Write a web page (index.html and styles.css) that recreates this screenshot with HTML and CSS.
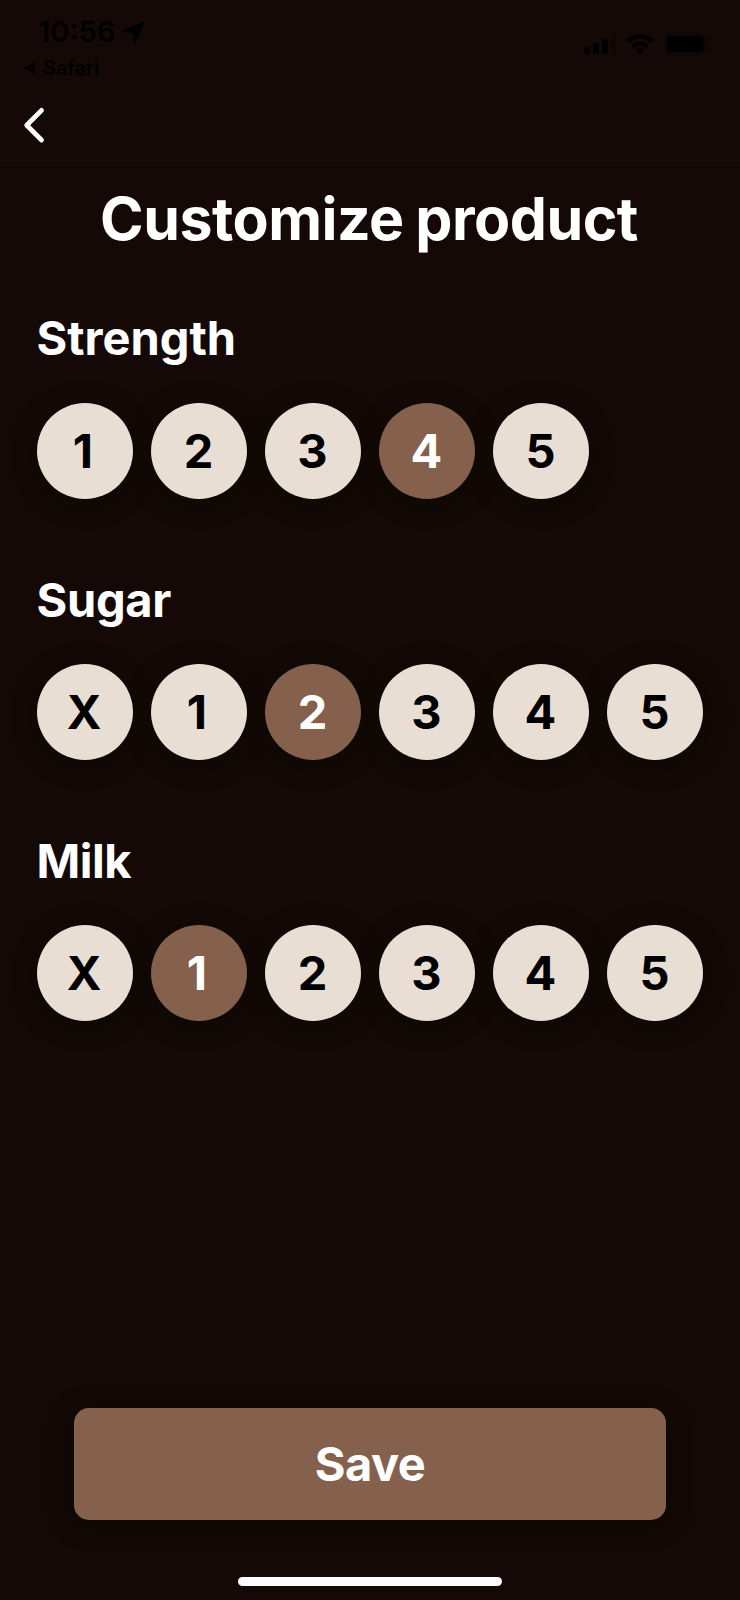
FILE: index.html
```
<!DOCTYPE html>
<html lang="en">
<head>
<meta charset="utf-8">
<title>Customize product</title>
<link rel="stylesheet" href="styles.css">
</head>
<body>
<div class="screen">
  <header class="status">
    <div class="status-left">
      <div class="clock"><span class="time">10:56</span>
        <svg class="location" width="23" height="23" viewBox="0 0 23 23"><path d="M21.500 .5 C22.300 .2 22.800 .8 22.500 1.600 L13.800 21.500 C13.200 22.800 11.500 22.500 11.400 21.100 L10.800 12.200 L2 11.400 C.6 11.300 .3 9.900 1.600 9.300 Z"/></svg>
      </div>
      <div class="return"><svg class="triangle" width="12" height="12" viewBox="0 0 12 12"><path d="M0 6 L12 0 V12 Z"/></svg><span class="app">Safari</span></div>
    </div>
    <div class="status-right">
      <svg class="signal" width="32" height="20" viewBox="0 0 32 20"><rect x="0" y="13" width="6" height="7" rx="1.5"/><rect x="9" y="9" width="6" height="11" rx="1.5"/><rect x="18" y="5" width="6" height="15" rx="1.5"/><rect x="26.500" y="0" width="5.500" height="20" rx="1.5" opacity=".25"/></svg>
      <svg class="wifi" width="28" height="21" viewBox="0 0 28 21"><g fill="none" stroke="#000" stroke-width="4"><path d="M1.500 7.500 Q14 -3 26.500 7.500"/><path d="M6.500 12.500 Q14 6.500 21.500 12.500"/></g><path d="M9.500 16 Q14 12.600 18.500 16 L14 20.500 Z"/></svg>
      <svg class="battery" width="46" height="22" viewBox="0 0 46 22"><rect x="1" y="1" width="39" height="20" rx="5" fill="none" stroke="#0b0907" stroke-width="2"/><rect x="2.500" y="3" width="36" height="16" rx="3"/><path d="M43 7 Q46 11 43 15 Z" fill="#0b0907"/></svg>
    </div>
  </header>
  <nav class="nav">
    <svg width="24" height="38" viewBox="0 0 24 38"><path d="M19.500 4.400 L4.700 19.200 L19.500 34" fill="none" stroke="#fff" stroke-width="4.800" stroke-linecap="round" stroke-linejoin="round"/></svg>
  </nav>
  <main class="content">
    <h1 class="title">Customize product</h1>
    <section class="group">
      <h2 class="label strength">Strength</h2>
      <div class="options"><button class="option one">1</button><button class="option">2</button><button class="option">3</button><button class="option selected">4</button><button class="option">5</button></div>
    </section>
    <section class="group">
      <h2 class="label sugar">Sugar</h2>
      <div class="options"><button class="option none">X</button><button class="option one">1</button><button class="option selected">2</button><button class="option">3</button><button class="option">4</button><button class="option">5</button></div>
    </section>
    <section class="group">
      <h2 class="label milk">Milk</h2>
      <div class="options"><button class="option none">X</button><button class="option selected one">1</button><button class="option">2</button><button class="option">3</button><button class="option">4</button><button class="option">5</button></div>
    </section>
  </main>
  <footer class="footer">
    <button class="save">Save</button>
    <div class="home-indicator"></div>
  </footer>
</div>
</body>
</html>
```
FILE: styles.css
```
* { box-sizing: border-box; margin: 0; }
body { background: #150907; }
button { border: 0; padding: 0; font-family: inherit; }
svg { display: block; }
.screen {
  width: 740px; height: 1600px; overflow: hidden;
  display: flex; flex-direction: column;
  background: #150907; color: #fff;
  font-family: Inter, "Liberation Sans", sans-serif;
}
.status {
  height: 94px; padding: 16px 29px 0 23px;
  display: flex; justify-content: space-between; color: #000;
}
.clock { display: flex; align-items: center; gap: 7px; height: 32px; padding-left: 15px; }
.time { font-size: 29px; line-height: 32px; font-weight: 600; letter-spacing: 0; }
.return { display: flex; align-items: center; gap: 8px; height: 26px; margin-top: 7px; }
.app { font-size: 20px; line-height: 26px; font-weight: 600; letter-spacing: -.1px; }
.status-right { display: flex; align-items: center; height: 24px; margin-top: 16px; }
.signal { margin-right: 10px; }
.wifi { margin-right: 11px; }
.nav { height: 74px; padding: 12px 0 0 22px; border-bottom: 1px solid #110605; }
.content { padding-top: 16px; }
.title {
  font-size: 59px; line-height: 70px; font-weight: 700;
  letter-spacing: -.5px; word-spacing: -2px; text-align: center;
  padding-right: 2px;
}
.group { height: 261.300px; padding-left: 37px; }
.title + .group { margin-top: 56.300px; }
.label { font-size: 47px; line-height: 56px; font-weight: 700; margin-left: -.5px; }
.strength { letter-spacing: 0; }
.sugar { letter-spacing: -.3px; }
.milk { letter-spacing: -.5px; }
.options { display: flex; gap: 18px; margin-top: 36.400px; isolation: isolate; }
.option {
  position: relative;
  width: 96px; height: 96px; border-radius: 50%;
  background: #e8ded4; color: #000;
  font-size: 47px; line-height: 56px; font-weight: 650;
  padding-right: 1px;
}
/* Shadows sit behind the whole row so they never darken a neighbour. */
.option::before {
  content: ""; position: absolute; inset: 0; z-index: -1;
  border-radius: 50%; box-shadow: 0 4px 18px 6px #0e0a03;
}
.none { font-weight: 700; padding-right: 2px; }
.selected { background: #85604c; color: #fff; font-weight: 700; }
.one { padding-right: 4px; }
.footer { margin-top: auto; display: flex; flex-direction: column; align-items: center; padding-bottom: 14px; }
.save {
  width: 592px; height: 112px; border-radius: 15px;
  background: #85604c; color: #fff;
  font-size: 47px; font-weight: 700; letter-spacing: -.5px; padding-bottom: 2px;
  box-shadow: 0 4px 18px 6px #0e0a03;
}
.home-indicator { width: 264px; height: 9px; margin-top: 57px; border-radius: 5px; background: #fff; }
```
